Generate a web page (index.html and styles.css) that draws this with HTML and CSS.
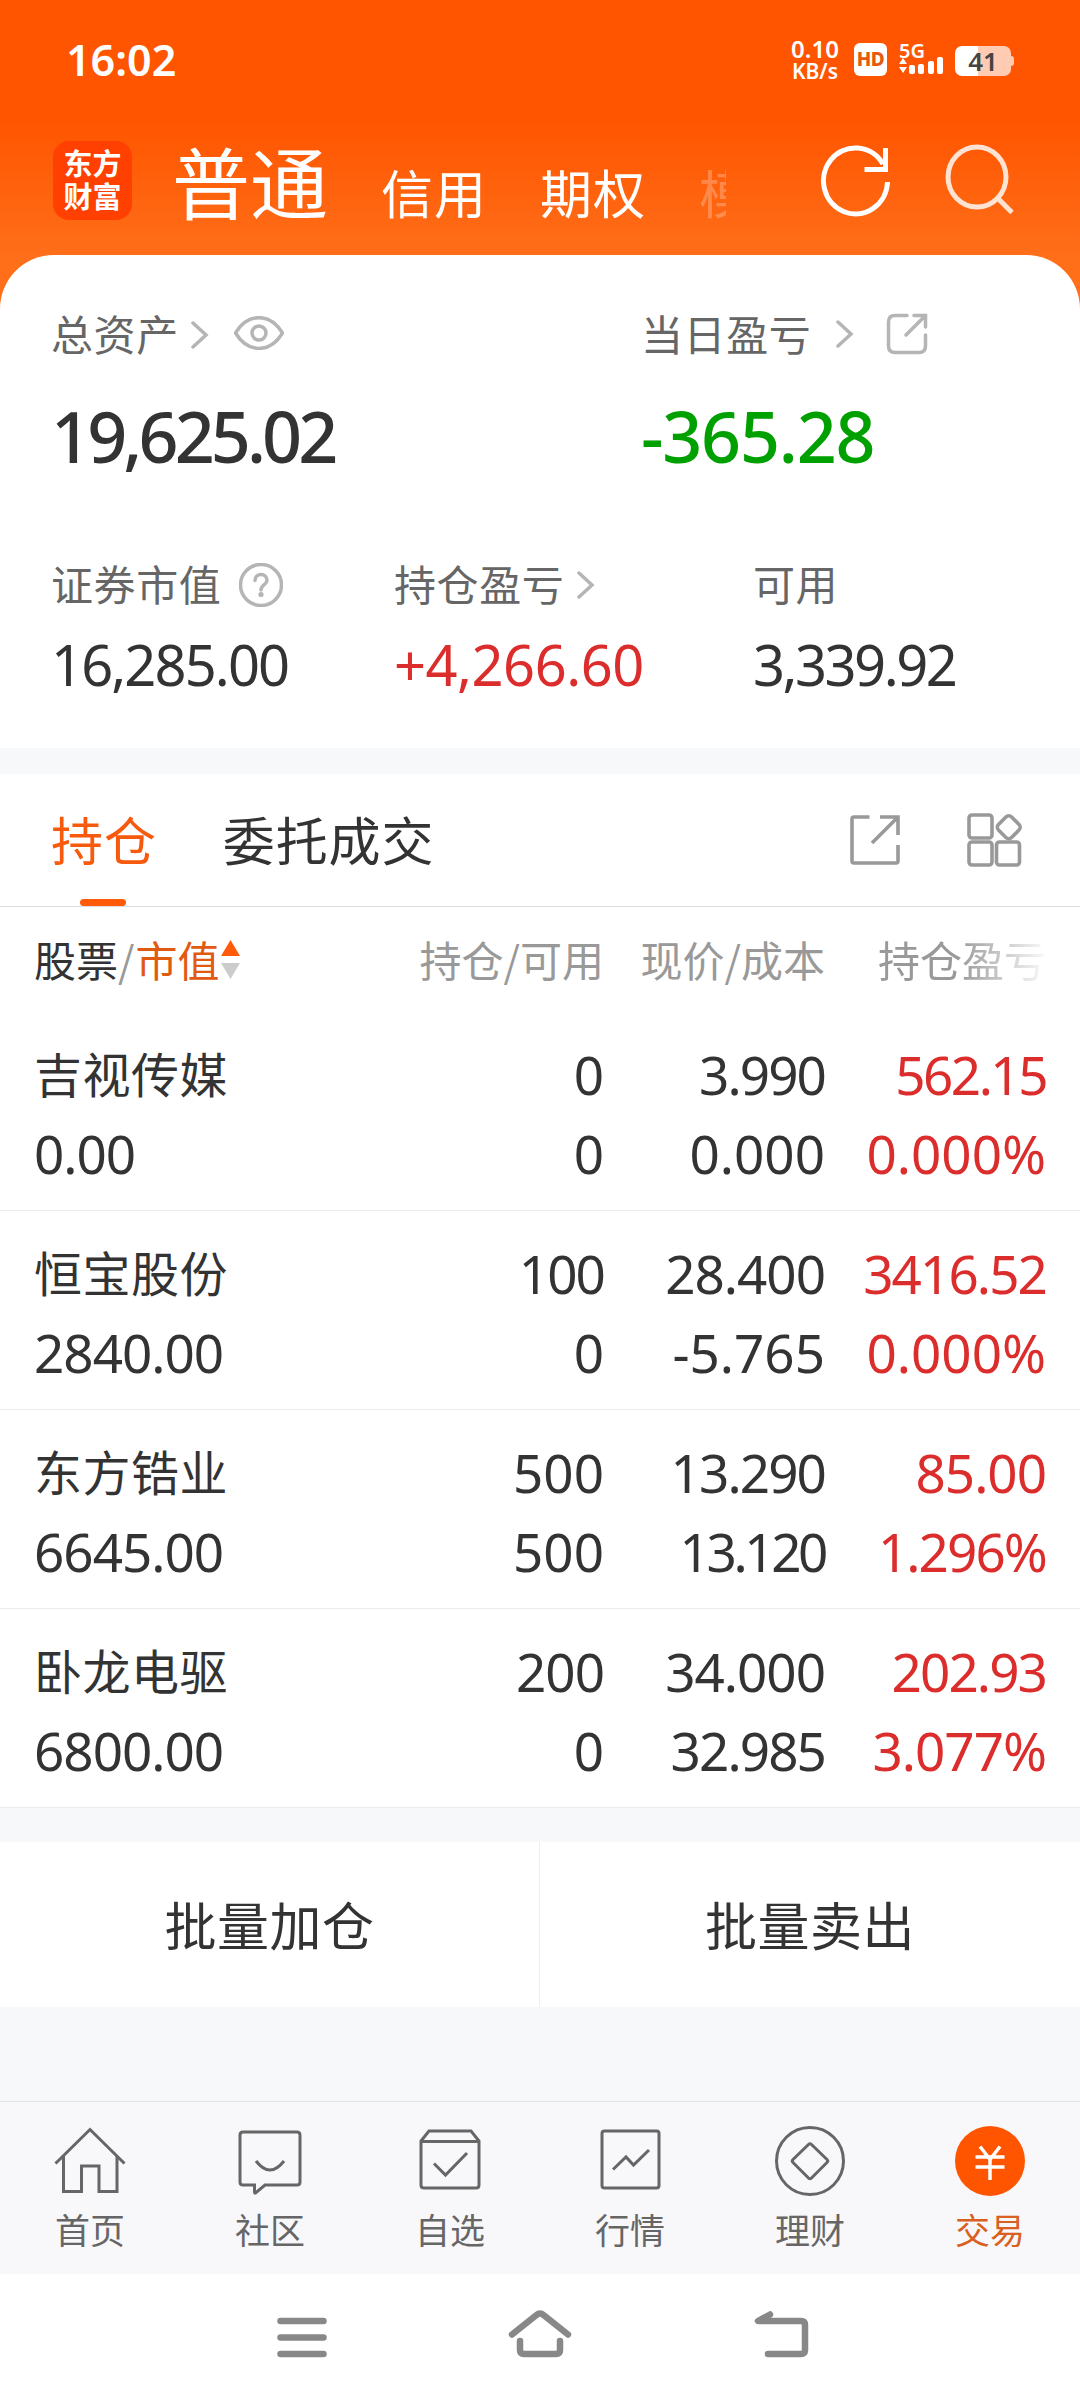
FILE: index.html
```html
<!DOCTYPE html>
<html lang="zh-CN">
<head>
    <meta charset="UTF-8">
    <meta name="viewport" content="width=device-width, initial-scale=1">
    <title>交易</title>
    <link rel="stylesheet" href="styles.css">
</head>
<body>
    <div class="top">
        <div class="status">
            <div class="time">16:02</div>
            <div class="status-icons">
                <div class="speed"><span>0.10</span><span class="unit">KB/s</span></div>
                <div class="hd">HD</div>
                <div class="signal">
                    <span>5G</span>
                    <svg class="bars" width="45" height="18" viewBox="0 0 45 18">
                        <path d="M0 7l4-6 4 6zM0 10h8l-4 6z"/>
                        <rect x="10" y="8" width="6" height="9" rx="2"/>
                        <rect x="19" y="7" width="6" height="10" rx="2"/>
                        <rect x="29" y="4" width="6" height="13" rx="2"/>
                        <rect x="38" y="0" width="6" height="17" rx="2"/>
                    </svg>
                </div>
                <div class="battery">41</div>
            </div>
        </div>

        <div class="header">
            <div class="logo"><span>东方</span><span>财富</span></div>
            <div class="account-tabs">
                <span class="current">普通</span>
                <span>信用</span>
                <span>期权</span>
                <span class="faded">模拟</span>
            </div>
            <div class="header-icons">
                <svg width="70" height="74" viewBox="0 0 70 74" fill="none" stroke="#fff" stroke-width="5">
                    <path d="M66.500 38A32 33 0 1 1 62 20"/>
                    <path d="M64.500 4v21.500H43.500"/>
                </svg>
                <svg class="search" width="72" height="74" viewBox="0 0 72 74" fill="none" stroke="#ffe3d2" stroke-width="5">
                    <ellipse cx="34" cy="33" rx="29" ry="30"/>
                    <path d="M54 53.500l15 15"/>
                </svg>
            </div>
        </div>

        <div class="card">
            <div class="assets">
                <div>
                    <div class="label">
                        总资产
                        <svg class="arrow" width="18" height="28" viewBox="0 0 18 28"><path d="M2 2l13 12L2 26"/></svg>
                        <svg class="eye" width="50" height="34" viewBox="0 0 50 34"><path d="M1.500 17C14-3.500 36-3.500 48.500 17 36 37.500 14 37.500 1.500 17z"/><circle cx="25" cy="17" r="7"/></svg>
                    </div>
                    <div class="value big">19,625.02</div>
                </div>
                <div>
                    <div class="label">
                        当日盈亏
                        <svg class="arrow arrow-far" width="18" height="28" viewBox="0 0 18 28"><path d="M2 2l13 12L2 26"/></svg>
                        <svg class="share" width="42" height="42" viewBox="0 0 42 42"><path d="M21 2.500H9Q2.500 2.500 2.500 9v24Q2.500 39.500 9 39.500h24Q39.500 39.500 39.500 33V22"/><path d="M28 2.500h11.500V14M39 3L20 22"/></svg>
                    </div>
                    <div class="value big loss">-365.28</div>
                </div>
            </div>
            <div class="details">
                <div>
                    <div class="label">
                        证券市值
                        <svg class="help" width="44" height="44" viewBox="0 0 44 44"><circle cx="22" cy="22" r="20.500"/><path d="M16 17.500C16 9.500 28 9.500 28 17.500 28 22 22 21.500 22 27"/><circle class="dot" cx="22" cy="31.500" r="2.600"/></svg>
                    </div>
                    <div class="value t2">16,285.00</div>
                </div>
                <div>
                    <div class="label">
                        持仓盈亏
                        <svg class="arrow arrow-near" width="18" height="28" viewBox="0 0 18 28"><path d="M2 2l13 12L2 26"/></svg>
                    </div>
                    <div class="value gain">+4,266.60</div>
                </div>
                <div>
                    <div class="label">可用</div>
                    <div class="value t3">3,339.92</div>
                </div>
            </div>
        </div>
    </div>

    <div class="positions">
        <div class="tabs">
            <div class="tab active">持仓</div>
            <div class="tab">委托成交</div>
            <div class="tab-icons">
                <svg width="52" height="52" viewBox="0 0 52 52"><path d="M20.500 3H5Q3 3 3 5v42q0 2 2 2h42q2 0 2-2V31"/><path d="M31 3h18v18M48.500 3.500L23 29"/></svg>
                <svg width="56" height="54" viewBox="0 0 56 54"><rect x="2" y="2" width="23" height="23" rx="3"/><rect x="2" y="29" width="23" height="23" rx="3"/><rect x="29.500" y="29" width="23" height="23" rx="3"/><rect x="32.500" y="5" width="18.500" height="18.500" rx="4" transform="rotate(45 41.750 14.250)"/></svg>
            </div>
        </div>

        <div class="row thead">
            <div class="sort"><b>股票</b>/<em>市值</em><svg width="19" height="39" viewBox="0 0 19 39"><path fill="#ff5a0a" d="M9.500 0L19 16H0z"/><path fill="#ccc" d="M0 23h19L9.500 39z"/></svg></div>
            <div>持仓/可用</div>
            <div>现价/成本</div>
            <div class="fade">持仓盈亏</div>
        </div>

        <div class="row">
            <div class="name">吉视传媒</div><div>0</div><div class="t2">3.990</div><div class="gain t3">562.15</div>
            <div class="t1">0.00</div><div>0</div><div>0.000</div><div class="gain">0.000%</div>
        </div>
        <div class="row">
            <div class="name">恒宝股份</div><div class="t2">100</div><div class="t1">28.400</div><div class="gain t2">3416.52</div>
            <div class="t1">2840.00</div><div>0</div><div>-5.765</div><div class="gain">0.000%</div>
        </div>
        <div class="row">
            <div class="name">东方锆业</div><div>500</div><div class="t2">13.290</div><div class="gain t1">85.00</div>
            <div class="t1">6645.00</div><div>500</div><div class="t4">13.120</div><div class="gain t2">1.296%</div>
        </div>
        <div class="row">
            <div class="name">卧龙电驱</div><div class="t1">200</div><div class="t1">34.000</div><div class="gain t2">202.93</div>
            <div class="t1">6800.00</div><div>0</div><div class="t2">32.985</div><div class="gain t1">3.077%</div>
        </div>
    </div>

    <div class="batch">
        <div>批量加仓</div>
        <div>批量卖出</div>
    </div>

    <div class="tabbar">
        <div class="item">
            <svg width="72" height="72" viewBox="0 0 72 72"><path d="M1.500 37.500L36 3.500l34.500 34"/><path d="M9.500 30v35.500h18V40H45v25.500h18V30"/></svg>
            首页
        </div>
        <div class="item">
            <svg width="72" height="72" viewBox="0 0 72 72"><path d="M9 6h54q3 0 3 3v47q0 3-3 3H31l-9.500 8q-1 .5-1-1v-7H9q-3 0-3-3V9q0-3 3-3z"/><path d="M22 35q14 18 28 0"/></svg>
            社区
        </div>
        <div class="item">
            <svg width="72" height="72" viewBox="0 0 72 72"><path d="M7 15l8-10h42l8 10v44q0 3-3 3H10q-3 0-3-3zM7 15.500h58"/><path d="M20 37.500L31.500 49 53 27"/></svg>
            自选
        </div>
        <div class="item">
            <svg width="72" height="72" viewBox="0 0 72 72"><rect x="8" y="5" width="57" height="57" rx="2.500"/><path d="M19 43.500L32 31l7.500 8L55 24"/></svg>
            行情
        </div>
        <div class="item">
            <svg width="72" height="72" viewBox="0 0 72 72"><circle cx="36" cy="35" r="33.500"/><path d="M34.500 18.500q1.500-1.500 3 0l15.500 15q1.500 1.500 0 3L37.500 52q-1.500 1.500-3 0L19 36.500q-1.500-1.500 0-3z"/></svg>
            理财
        </div>
        <div class="item active">
            <svg width="72" height="72" viewBox="0 0 72 72"><circle class="disc" cx="36" cy="35" r="35"/><path class="yen" d="M26 20.500l10 13 10-13M36 33.500V54M21.500 31h29M21.500 41h29"/></svg>
            交易
        </div>
    </div>

    <div class="navbar">
        <svg width="50" height="56" viewBox="0 0 50 56"><path d="M3.500 16h43M3.500 32.500h43M3.500 49h43"/></svg>
        <svg width="64" height="56" viewBox="0 0 64 56"><path d="M4 29.500L28.500 10q3.500-3 7 0L60 29.500M12 36v9q0 4 4 4h32q4 0 4-4v-9"/></svg>
        <svg width="56" height="56" viewBox="0 0 56 56"><path d="M17 9.500L5 16h43q4 0 4 4v25q0 4-4 4H15"/></svg>
    </div>
</body>
</html>
```
FILE: styles.css
```css
* {
    box-sizing: border-box;
}

body {
    width: 1080px;
    margin: 0;
    background-color: #f7f8fa;
    color: #333;
    font-family: "Noto Sans CJK SC", sans-serif;
}

svg {
    display: block;
    flex: none;
    fill: none;
}

.top {
    background: linear-gradient(#ff5500 0, #ff5500 120px, #ff6e19 255px);
}

/* system status bar */
.status {
    display: flex;
    justify-content: space-between;
    align-items: center;
    height: 118px;
    padding: 0 66px;
    color: #fff;
    font-family: "Noto Sans", sans-serif;
    font-weight: 600;
}

.time {
    font-size: 43px;
}

.status-icons {
    display: flex;
    align-items: center;
    height: 40px;
}

.speed {
    display: flex;
    flex-direction: column;
    width: 50px;
    margin-right: 14px;
    font-size: 24px;
    line-height: 23px;
    text-align: center;
}

.speed .unit {
    font-size: 21px;
    line-height: 22px;
}

.hd {
    width: 33px;
    height: 33px;
    margin-right: 12px;
    border-radius: 6px;
    background-color: #fff;
    color: #e8590c;
    font-size: 19px;
    font-weight: 800;
    letter-spacing: -0.5px;
    line-height: 33px;
    text-align: center;
}

.signal {
    width: 45px;
    height: 34px;
    margin-right: 11px;
    font-size: 20px;
    line-height: 17px;
}

.signal span {
    display: block;
    height: 15px;
}

.signal .bars {
    fill: #fff;
}

.battery {
    position: relative;
    width: 56px;
    height: 30px;
    margin: 3px 3px 0 0;
    border-radius: 7px;
    background: linear-gradient(90deg, #fff 41%, #ffcbb3 41%);
    color: #444;
    font-size: 26px;
    line-height: 30px;
    text-align: center;
}

.battery::after {
    content: "";
    position: absolute;
    top: 10px;
    right: -3px;
    width: 3px;
    height: 10px;
    border-radius: 0 3px 3px 0;
    background-color: #ffcbb3;
}

/* account header */
.header {
    display: flex;
    align-items: center;
    height: 125px;
    margin-bottom: 12px;
    padding: 0 65px 0 53px;
    color: #fff;
}

.logo {
    display: flex;
    flex-direction: column;
    justify-content: center;
    width: 79px;
    height: 79px;
    padding-bottom: 3px;
    border-radius: 16px;
    background-color: #ff4000;
    font-size: 29px;
    font-weight: 700;
    line-height: 33px;
    text-align: center;
}

.account-tabs {
    display: flex;
    align-items: baseline;
    gap: 53px;
    height: 102px;
    margin-left: 40px;
    font-size: 52px;
    letter-spacing: 1px;
    line-height: 100px;
    white-space: nowrap;
}

.account-tabs .current {
    font-size: 78px;
    letter-spacing: 0;
}

.account-tabs .faded {
    width: 27px;
    overflow: hidden;
    opacity: 0.25;
}

.header-icons {
    display: flex;
    gap: 52px;
    margin-left: auto;
}

/* asset summary */
.card {
    height: 493px;
    padding: 47px 51px 0;
    border-radius: 54px 54px 0 0;
    background-color: #fff;
}

.assets {
    display: grid;
    grid-template-columns: 590px 1fr;
}

.details {
    display: grid;
    grid-template-columns: 343px 359px 1fr;
    margin-top: 76px;
}

.label {
    display: flex;
    align-items: center;
    height: 60px;
    color: #666;
    font-size: 42px;
    letter-spacing: 0.6px;
}

.label svg {
    margin-top: 4px;
    stroke: #b5b5b5;
    stroke-width: 3.5;
    stroke-linecap: round;
}

.label .arrow {
    margin-top: 6px;
    margin-left: 12px;
}

.label .arrow-near {
    margin-left: 13px;
}

.label .arrow-far {
    margin-top: 3px;
    margin-left: 25px;
}

.label .eye {
    margin-top: 2px;
    margin-left: 25px;
}

.label .share {
    margin-left: 32px;
}

.label .help {
    margin-top: 6px;
    margin-left: 18px;
}

.label .dot {
    fill: #b5b5b5;
    stroke: none;
}

.value {
    height: 80px;
    margin-top: 12px;
    font-family: "Noto Sans", sans-serif;
    font-size: 56px;
    letter-spacing: -0.5px;
    line-height: 80px;
}

.value.big {
    margin-top: 34px;
    font-size: 70px;
    font-weight: 500;
    letter-spacing: -3.9px;
}

.value.big.loss {
    color: #00a000;
    letter-spacing: -1.2px;
}

.gain {
    color: #dc2d2d;
}

/* positions list */
.positions {
    margin-top: 26px;
    background-color: #fff;
}

.tabs {
    display: flex;
    height: 133px;
    padding: 0 57px 0 51px;
    border-bottom: 1px solid #ddd;
}

.tab {
    position: relative;
    margin-right: 66px;
    font-size: 52px;
    letter-spacing: 0.9px;
    line-height: 130px;
}

.tab.active {
    color: #f75a0c;
}

.tab.active::after {
    content: "";
    position: absolute;
    bottom: 0;
    left: 29px;
    width: 46px;
    height: 7px;
    border-radius: 4px;
    background-color: #ff5a0a;
}

.tab-icons {
    display: flex;
    align-items: center;
    gap: 66px;
    margin-left: auto;
}

.tab-icons svg {
    stroke: #999;
    stroke-width: 3.6;
}

.row {
    display: grid;
    grid-template-columns: 302px 268px 221px 221px;
    align-content: start;
    height: 199px;
    padding: 23px 34px 0;
    border-bottom: 1px solid #ebebeb;
    font-family: "Noto Sans", sans-serif;
    font-size: 53px;
    line-height: 79px;
    text-align: right;
    white-space: nowrap;
}

.row > :nth-child(4n + 1) {
    text-align: left;
}

.row .name {
    font-family: "Noto Sans CJK SC", sans-serif;
    font-size: 48px;
    letter-spacing: 0.5px;
    line-height: 74px;
}

.row.thead {
    height: 105px;
    padding-top: 0;
    border-bottom: none;
    color: #999;
    font-family: "Noto Sans CJK SC", sans-serif;
    font-size: 42px;
    line-height: 104px;
}

.sort {
    display: flex;
    align-items: center;
}

.sort b {
    color: #333;
    font-weight: 400;
}

.sort em {
    margin: 0 1px;
    color: #e05a10;
    font-style: normal;
}

.fade {
    -webkit-mask-image: linear-gradient(90deg, #000 60%, transparent 102%);
    mask-image: linear-gradient(90deg, #000 60%, transparent 102%);
}

/* digit tracking */
.t1 {
    letter-spacing: -1px;
}

.t2 {
    letter-spacing: -1.9px;
}

.value.t2 {
    letter-spacing: -1.9px;
}

.t3,
.value.t3 {
    letter-spacing: -2.5px;
}

.t4 {
    letter-spacing: -3.4px;
}

/* batch buttons */
.batch {
    display: grid;
    grid-template-columns: 539px 541px;
    height: 165px;
    margin: 34px 0 94px;
    background-color: #fff;
    font-size: 52px;
    letter-spacing: 0.5px;
    line-height: 164px;
    text-align: center;
}

.batch div + div {
    border-left: 1px solid #eee;
}

/* bottom tab bar */
.tabbar {
    display: grid;
    grid-template-columns: repeat(6, 1fr);
    height: 173px;
    padding-top: 24px;
    border-top: 1px solid #e2e2e4;
    background-color: #f8f8fa;
}

.item {
    display: flex;
    flex-direction: column;
    align-items: center;
    color: #666;
    font-size: 35px;
    line-height: 62px;
}

.item svg {
    stroke: #666;
    stroke-width: 3;
}

.item.active {
    color: #d9601f;
}

.item .disc {
    fill: #ff5500;
    stroke: none;
}

.item .yen {
    stroke: #fff;
    stroke-width: 3.5;
}

/* system navigation */
.navbar {
    display: flex;
    justify-content: center;
    gap: 181px;
    height: 126px;
    padding: 31px 0 0 5px;
    background-color: #fff;
}

.navbar svg {
    stroke: #888;
    stroke-width: 6.5;
    stroke-linecap: round;
    stroke-linejoin: round;
}
```
